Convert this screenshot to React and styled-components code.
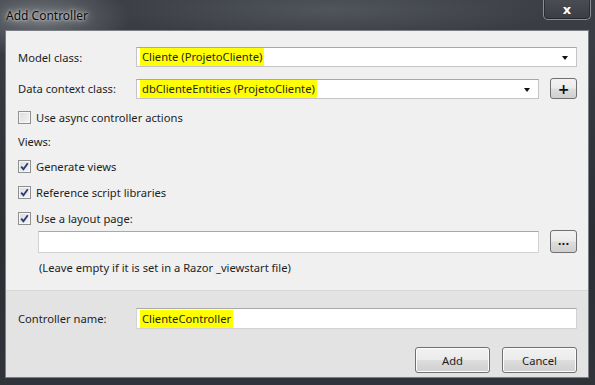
import styled, { createGlobalStyle } from 'styled-components';

const GlobalStyle = createGlobalStyle`
  html, body {
    margin: 0;
    padding: 0;
    background: #2a2e33;
  }
  * { box-sizing: border-box; }
`;

// JANELA
const Window = styled.div`
  width: 595px;
  height: 385px;
  display: flex;
  flex-direction: column;
  font-family: "Noto Sans", "Open Sans", sans-serif;
  font-size: 11.2px;
  color: #1e1e1e;
  background:
    radial-gradient(ellipse 90px 40px at 40px 18px, rgba(150, 155, 160, 0.55) 0%, transparent 100%),
    radial-gradient(ellipse 220px 30px at 330px 10px, rgba(120, 125, 130, 0.35) 0%, transparent 100%),
    linear-gradient(180deg, #3c4046 0%, #2b2f34 60%, #30343a 100%);
  overflow: hidden;
`;

const TitleBar = styled.div`
  height: 30px;
  display: flex;
  justify-content: space-between;
  align-items: flex-start;
  padding: 0 4px 0 6px;
`;

const Title = styled.span`
  margin-top: 7px;
  color: #0c0c0c;
  font-size: 12px;
  text-shadow: 0 0 8px rgba(255, 255, 255, 0.9), 0 0 3px rgba(255, 255, 255, 0.8);
`;

const CloseButton = styled.div`
  width: 48px;
  height: 21px;
  margin-top: -1px;
  border: 1px solid #8b8f94;
  border-top: none;
  border-radius: 0 0 5px 5px;
  background: linear-gradient(180deg, #4a4e54 0%, #3a3e44 100%);
  box-shadow: inset 0 0 0 1px rgba(0, 0, 0, 0.35);
  display: flex;
  align-items: center;
  justify-content: center;
  color: #fff;
  font-family: "DejaVu Sans", sans-serif;
  font-weight: bold;
  font-size: 13px;
`;

const Client = styled.div`
  flex: 1;
  margin: 0 6px 7px 5px;
  border: 1px solid #7b7f85;
  display: flex;
  flex-direction: column;
`;

const TopSection = styled.div`
  height: 259px;
  background: #f0f0f0;
  padding: 16px 11px 0 12px;
  display: flex;
  flex-direction: column;
`;

const BottomSection = styled.div`
  flex: 1;
  background: #e3e3e3;
  border-top: 1px solid #d8d8d8;
  padding: 17px 11px 0 12px;
  display: flex;
  flex-direction: column;
`;

const Row = styled.div`
  display: flex;
  align-items: center;
  margin-top: ${({ top }) => top || 0}px;
  padding-left: ${({ indent }) => indent || 0}px;
`;

const Label = styled.span`
  width: 118px;
  flex-shrink: 0;
`;

const Field = styled.div`
  flex: 1;
  height: ${({ h }) => h || 20}px;
  background: #fff;
  border: 1px solid ${({ dim }) => (dim ? '#d2d2d2' : '#c4c4c4')};
  border-top-color: #a8a8a8;
  display: flex;
  align-items: center;
  padding-left: 3px;
  position: relative;
`;

const Highlight = styled.span`
  background: #ffff00;
  padding: 1px 2px 2px 2px;
  line-height: 15px;
`;

const Arrow = styled.span`
  position: absolute;
  right: 8px;
  top: 8px;
  width: 0;
  height: 0;
  border-left: 3.5px solid transparent;
  border-right: 3.5px solid transparent;
  border-top: 4px solid #111;
`;

const SmallButton = styled.div`
  width: 27px;
  height: ${({ h }) => h || 21}px;
  margin-left: 11px;
  border: 1px solid #707070;
  border-radius: 3px;
  background: linear-gradient(180deg, #f2f2f2 0%, #ebebeb 48%, #dddddd 52%, #cfcfcf 100%);
  display: flex;
  align-items: center;
  justify-content: center;
  color: #111;
  font-weight: bold;
  font-family: "DejaVu Sans", sans-serif;
  font-size: ${({ fs }) => fs || 14}px;
  line-height: 1;
`;

const CheckRow = styled.label`
  display: flex;
  align-items: center;
  gap: 5px;
  margin-top: ${({ top }) => top || 0}px;
  height: 16px;
`;

const Box = styled.span`
  width: 13px;
  height: 13px;
  border: 1px solid #8e8f8f;
  background: linear-gradient(135deg, #dcdcdc 0%, #f4f4f4 100%);
  box-shadow: inset 0 0 0 1px #f6f6f6;
  display: flex;
  align-items: center;
  justify-content: center;
`;

const Text = styled.div`
  margin-top: ${({ top }) => top || 0}px;
  padding-left: ${({ indent }) => indent || 0}px;
  height: 16px;
  display: flex;
  align-items: center;
`;

const ButtonBar = styled.div`
  display: flex;
  justify-content: flex-end;
  gap: 12px;
  margin-top: 18px;
`;

const DialogButton = styled.div`
  width: 75px;
  height: 26px;
  border: 1px solid #707070;
  border-radius: 3px;
  background: linear-gradient(180deg, #f2f2f2 0%, #ebebeb 48%, #dddddd 52%, #cfcfcf 100%);
  box-shadow: inset 0 0 0 1px #fcfcfc;
  display: flex;
  align-items: center;
  justify-content: center;
`;

function Checkbox({ checked, children, top }) {
  return (
    <CheckRow top={top}>
      <Box>
        {checked && (
          <svg width="9" height="9" viewBox="0 0 9 9">
            <path d="M1.2 4.6 L3.4 7.2 L7.8 1.2" fill="none" stroke="#2c3e7a" strokeWidth="1.9" />
          </svg>
        )}
      </Box>
      <span>{children}</span>
    </CheckRow>
  );
}

export default function App() {
  return (
    <>
      <GlobalStyle />
      <Window>
        <TitleBar>
          <Title>Add Controller</Title>
          <CloseButton>x</CloseButton>
        </TitleBar>
        <Client>
          <TopSection>
            <Row>
              <Label>Model class:</Label>
              <Field>
                <Highlight>Cliente (ProjetoCliente)</Highlight>
                <Arrow />
              </Field>
            </Row>
            <Row top={11}>
              <Label>Data context class:</Label>
              <Field>
                <Highlight>dbClienteEntities (ProjetoCliente)</Highlight>
                <Arrow />
              </Field>
              <SmallButton>+</SmallButton>
            </Row>
            <Checkbox top={10}>Use async controller actions</Checkbox>
            <Text top={8}>Views:</Text>
            <Checkbox top={9} checked>Generate views</Checkbox>
            <Checkbox top={10} checked>Reference script libraries</Checkbox>
            <Checkbox top={10} checked>Use a layout page:</Checkbox>
            <Row top={4} indent={20}>
              <Field h={22} dim />
              <SmallButton h={23} fs={10}>...</SmallButton>
            </Row>
            <Text top={6} indent={21}>(Leave empty if it is set in a Razor _viewstart file)</Text>
          </TopSection>
          <BottomSection>
            <Row>
              <Label>Controller name:</Label>
              <Field h={21} dim>
                <Highlight>ClienteController</Highlight>
              </Field>
            </Row>
            <ButtonBar>
              <DialogButton>Add</DialogButton>
              <DialogButton>Cancel</DialogButton>
            </ButtonBar>
          </BottomSection>
        </Client>
      </Window>
    </>
  );
}
